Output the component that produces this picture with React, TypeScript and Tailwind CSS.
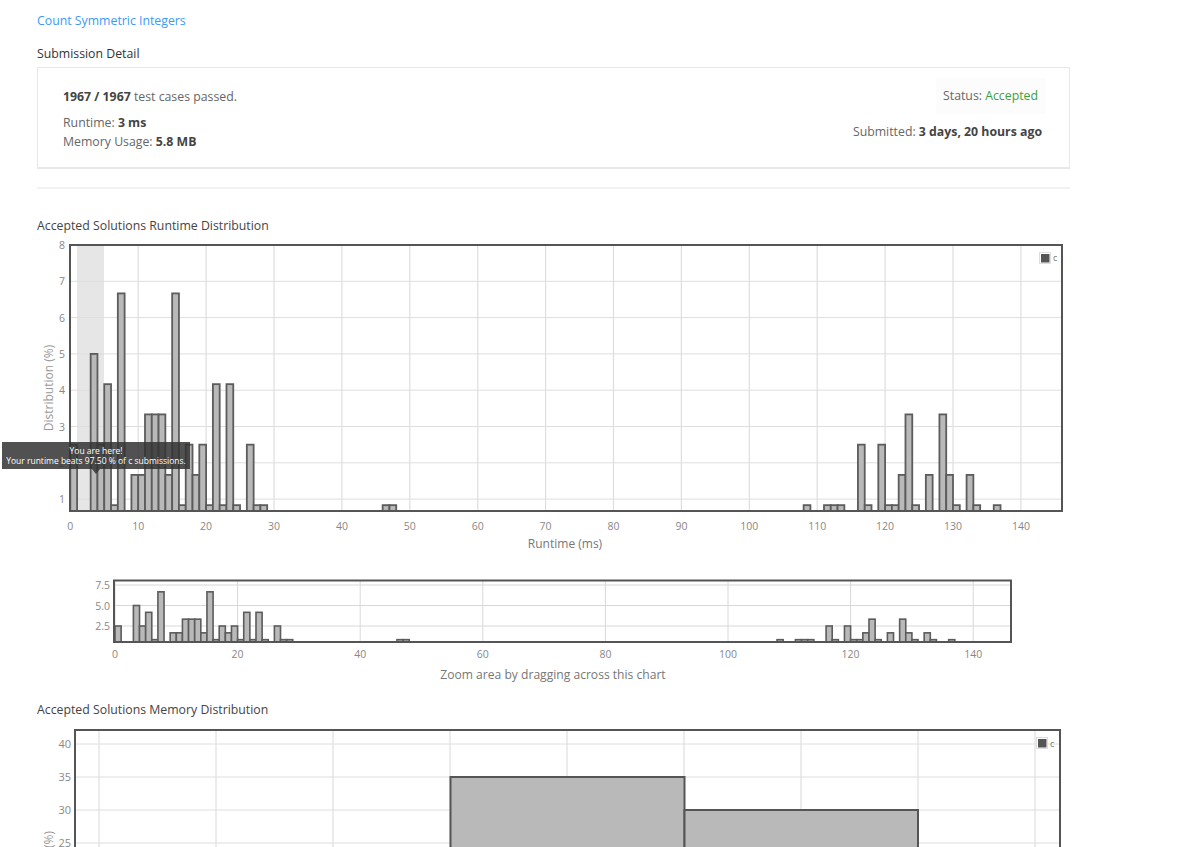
const bins: [number, number][] = [
  [0, 3], [3, 6], [4, 3], [5, 5], [6, 1], [7, 8], [9, 2], [10, 2], [11, 4], [12, 4], [13, 4], [14, 2], [15, 8], [16, 1],
  [17, 3], [18, 2], [19, 3], [20, 1], [21, 5], [22, 1], [23, 5], [24, 1], [26, 3], [27, 1], [28, 1], [46, 1], [47, 1],
  [108, 1], [111, 1], [112, 1], [113, 1], [116, 3], [117, 1], [119, 3], [120, 1], [121, 1], [122, 2], [123, 4], [124, 1],
  [126, 2], [128, 4], [129, 2], [130, 1], [132, 2], [133, 1], [136, 1],
];

const unit = 5 / 6;

function RuntimeChart() {
  const x = (v: number) => 70.3 + v * 6.79;
  const y = (v: number) => 245 + (8 - v) * 36.3;
  const xTicks = [0, 10, 20, 30, 40, 50, 60, 70, 80, 90, 100, 110, 120, 130, 140];
  const yTicks = [1, 2, 3, 4, 5, 6, 7, 8];
  return (
    <svg viewBox="0 235 1200 325" className="block w-[1200px] h-[325px]">
      <rect x={77} y={245} width={27} height={266} fill="#e6e6e6" />
      {xTicks.map((t) => (
        <line key={t} x1={x(t)} x2={x(t)} y1={245} y2={511} stroke="#dedede" strokeWidth={1.2} />
      ))}
      {yTicks.map((t) => (
        <line key={t} x1={70} x2={1062} y1={y(t)} y2={y(t)} stroke="#dedede" />
      ))}
      {bins.map(([b, c]) => (
        <rect key={b} x={x(b)} y={y(c * unit)} width={6.79} height={511 - y(c * unit)} fill="#b9b9b9" stroke="#5c5c5c" strokeWidth={1.8} />
      ))}
      <rect x={70} y={245} width={992} height={266} fill="none" stroke="#555" strokeWidth={2} />
      {xTicks.map((t) => (
        <text key={t} x={x(t)} y={530} textAnchor="middle" fontSize={10.5} fill="#888">{t}</text>
      ))}
      {yTicks.map((t) => (
        <text key={t} x={65} y={y(t) + 4} textAnchor="end" fontSize={10.5} fill="#888">{t}</text>
      ))}
      <text transform="translate(53 388) rotate(-90)" textAnchor="middle" fontSize={12} fill="#999">Distribution (%)</text>
      <text x={565} y={548} textAnchor="middle" fontSize={12} fill="#777">Runtime (ms)</text>
      <rect x={1039.5} y={252.5} width={11} height={11} fill="#fff" stroke="#ddd" />
      <rect x={1041} y={254} width={8.5} height={8.5} fill="#555" />
      <text x={1053} y={261} fontSize={9} fill="#777">c</text>
    </svg>
  );
}

function OverviewChart() {
  const x = (v: number) => 115 + v * 6.13;
  const y = (v: number) => 646.5 - v * 8.2;
  const xTicks = [0, 20, 40, 60, 80, 100, 120, 140];
  const yTicks = [2.5, 5, 7.5];
  return (
    <svg viewBox="0 570 1200 115" className="block w-[1200px] h-[115px]">
      {xTicks.map((t) => (
        <line key={t} x1={x(t)} x2={x(t)} y1={580} y2={642} stroke="#d8d8d8" />
      ))}
      {yTicks.map((t) => (
        <line key={t} x1={114} x2={1011} y1={y(t)} y2={y(t)} stroke="#d8d8d8" />
      ))}
      {bins.map(([b, c]) => (
        <rect key={b} x={x(b)} y={y(c * unit)} width={6.13} height={642 - y(c * unit)} fill="#b9b9b9" stroke="#5c5c5c" strokeWidth={1.6} />
      ))}
      <rect x={114} y={580.5} width={897} height={61.5} fill="none" stroke="#555" strokeWidth={2} />
      {xTicks.map((t) => (
        <text key={t} x={x(t)} y={658} textAnchor="middle" fontSize={10.5} fill="#888">{t}</text>
      ))}
      {yTicks.map((t) => (
        <text key={t} x={110} y={y(t) + 4} textAnchor="end" fontSize={10.5} fill="#888">{t.toFixed(1)}</text>
      ))}
      <text x={553} y={679} textAnchor="middle" fontSize={12.1} fill="#777">Zoom area by dragging across this chart</text>
    </svg>
  );
}

function MemoryChart() {
  const xTicks = [99, 216, 333, 450, 567, 684, 801, 918, 1035];
  const yTicks = [[40, 744], [35, 777], [30, 810], [25, 843]];
  return (
    <svg viewBox="0 725 1200 122" className="block w-[1200px] h-[122px]">
      {xTicks.map((t) => (
        <line key={t} x1={t} x2={t} y1={730} y2={847} stroke="#d8d8d8" />
      ))}
      {yTicks.map(([l, p]) => (
        <line key={l} x1={75} x2={1060} y1={p} y2={p} stroke="#dedede" />
      ))}
      <rect x={450.5} y={777} width={234} height={80} fill="#b9b9b9" stroke="#555" strokeWidth={2} />
      <rect x={684.5} y={810} width={233.5} height={47} fill="#b9b9b9" stroke="#555" strokeWidth={2} />
      <rect x={75} y={730} width={985} height={130} fill="none" stroke="#555" strokeWidth={2} />
      {yTicks.map(([l, p]) => (
        <text key={l} x={71} y={p + 4} textAnchor="end" fontSize={11} fill="#888">{l}</text>
      ))}
      <text transform="translate(53 848) rotate(-90)" fontSize={12} fill="#999">(%)</text>
      <rect x={1036.5} y={737.5} width={11} height={11} fill="#fff" stroke="#ddd" />
      <rect x={1038} y={739} width={8.5} height={8.5} fill="#555" />
      <text x={1050} y={747} fontSize={9} fill="#777">c</text>
    </svg>
  );
}

export default function App() {
  return (
    <div className="h-[847px] w-[1200px] overflow-hidden bg-white font-['Open_Sans',sans-serif] text-[12.3px] leading-5 text-[#666]">
      <div className="ml-[37px] w-[1033px]">
        <a className="block pt-[11px] text-[#3b99fc]">Count Symmetric Integers</a>
        <h4 className="mt-[13px] font-medium text-[#333]">Submission Detail</h4>
        <div className="mt-[3px] flex h-[102px] justify-between border border-b-2 border-[#e7e7e7] pl-[25px] pr-[27px]">
          <div className="pt-[19px]">
            <div><b className="font-bold text-[#444]">1967 / 1967</b> test cases passed.</div>
            <div className="mt-[6px]">Runtime: <b className="font-bold text-[#444]">3 ms</b></div>
            <div className="mt-[-1px]">Memory Usage: <b className="font-bold text-[#444]">5.8 MB</b></div>
          </div>
          <div className="flex flex-col items-end">
            <div className="mr-[-4px] mt-[10px] flex h-[36px] items-center bg-[#fcfcfc] pl-[7px] pr-[8px]">
              <span>Status: <span className="text-[#3c9f40]">Accepted</span></span>
            </div>
            <div className="mt-[8px]">Submitted: <b className="font-bold text-[#444]">3 days, 20 hours ago</b></div>
          </div>
        </div>
        <div className="mt-[18px] h-[2px] bg-[#f2f2f2]" />
        <h4 className="mt-[27px] h-[19px] font-medium text-[#444]">Accepted Solutions Runtime Distribution</h4>
      </div>
      <div className="relative">
        <RuntimeChart />
        <div className="absolute left-[2px] top-[207px] flex h-[27px] w-[188px] flex-col items-center justify-center bg-[#333]/85 text-[8.5px] leading-[10px] text-white">
          <span>You are here!</span>
          <span className="whitespace-nowrap">Your runtime beats 97.50 % of c submissions.</span>
          <div className="absolute left-[90px] top-[27px] border-x-[4px] border-t-[5px] border-x-transparent border-t-[#333]/85" />
        </div>
      </div>
      <div className="mt-[10px]">
        <OverviewChart />
      </div>
      <h4 className="ml-[37px] mt-[15px] h-[25px] font-medium leading-5 text-[#444]">Accepted Solutions Memory Distribution</h4>
      <MemoryChart />
    </div>
  );
}
